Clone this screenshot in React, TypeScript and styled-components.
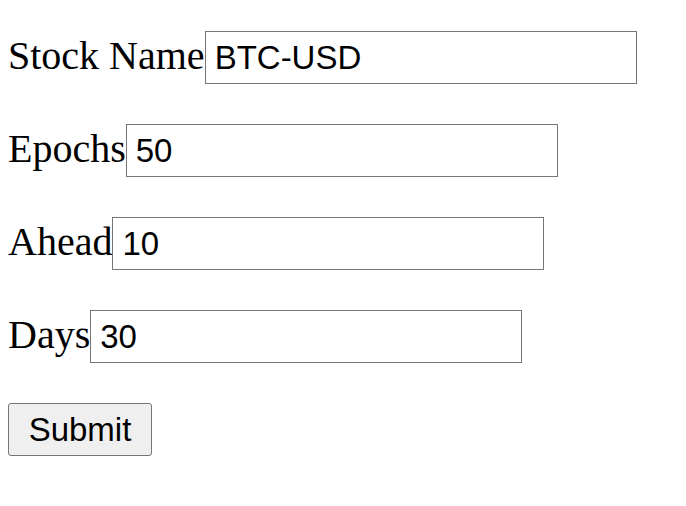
import React from "react";
import styled, { createGlobalStyle } from "styled-components";

const Global = createGlobalStyle`
  body {
    margin: 8px;
    background: #ffffff;
    font-family: "Liberation Serif", "Times New Roman", serif;
  }
`;

const Form = styled.form`
  display: flex;
  flex-direction: column;
  align-items: flex-start;
  gap: 40px;
  padding-top: 23px;
`;

const Row = styled.div`
  display: flex;
  align-items: baseline;
  height: 53px;
`;

const Label = styled.label`
  font-family: "Liberation Serif", "Times New Roman", serif;
  font-size: 40px;
  line-height: 1;
  color: #000;
`;

const Input = styled.input`
  box-sizing: border-box;
  width: 432px;
  height: 53px;
  padding: 0 9px;
  border: 1px solid #767676;
  border-radius: 0;
  font-family: "Liberation Sans", Arial, sans-serif;
  font-size: 33px;
  color: #000;
  background: #fff;
  outline: none;
`;

const Button = styled.button`
  box-sizing: border-box;
  height: 53px;
  width: 144px;
  padding: 0;
  border: 1px solid #767676;
  border-radius: 3px;
  background: #efefef;
  font-family: "Liberation Sans", Arial, sans-serif;
  font-size: 33px;
  color: #000;
`;

const fields = [
  { label: "Stock Name", value: "BTC-USD" },
  { label: "Epochs", value: "50" },
  { label: "Ahead", value: "10" },
  { label: "Days", value: "30" },
];

export default function App() {
  return (
    <>
      <Global />
      <Form onSubmit={(e) => e.preventDefault()}>
        {fields.map((f) => (
          <Row key={f.label}>
            <Label>{f.label}</Label>
            <Input type="text" defaultValue={f.value} />
          </Row>
        ))}
        <Button type="submit">Submit</Button>
      </Form>
    </>
  );
}
